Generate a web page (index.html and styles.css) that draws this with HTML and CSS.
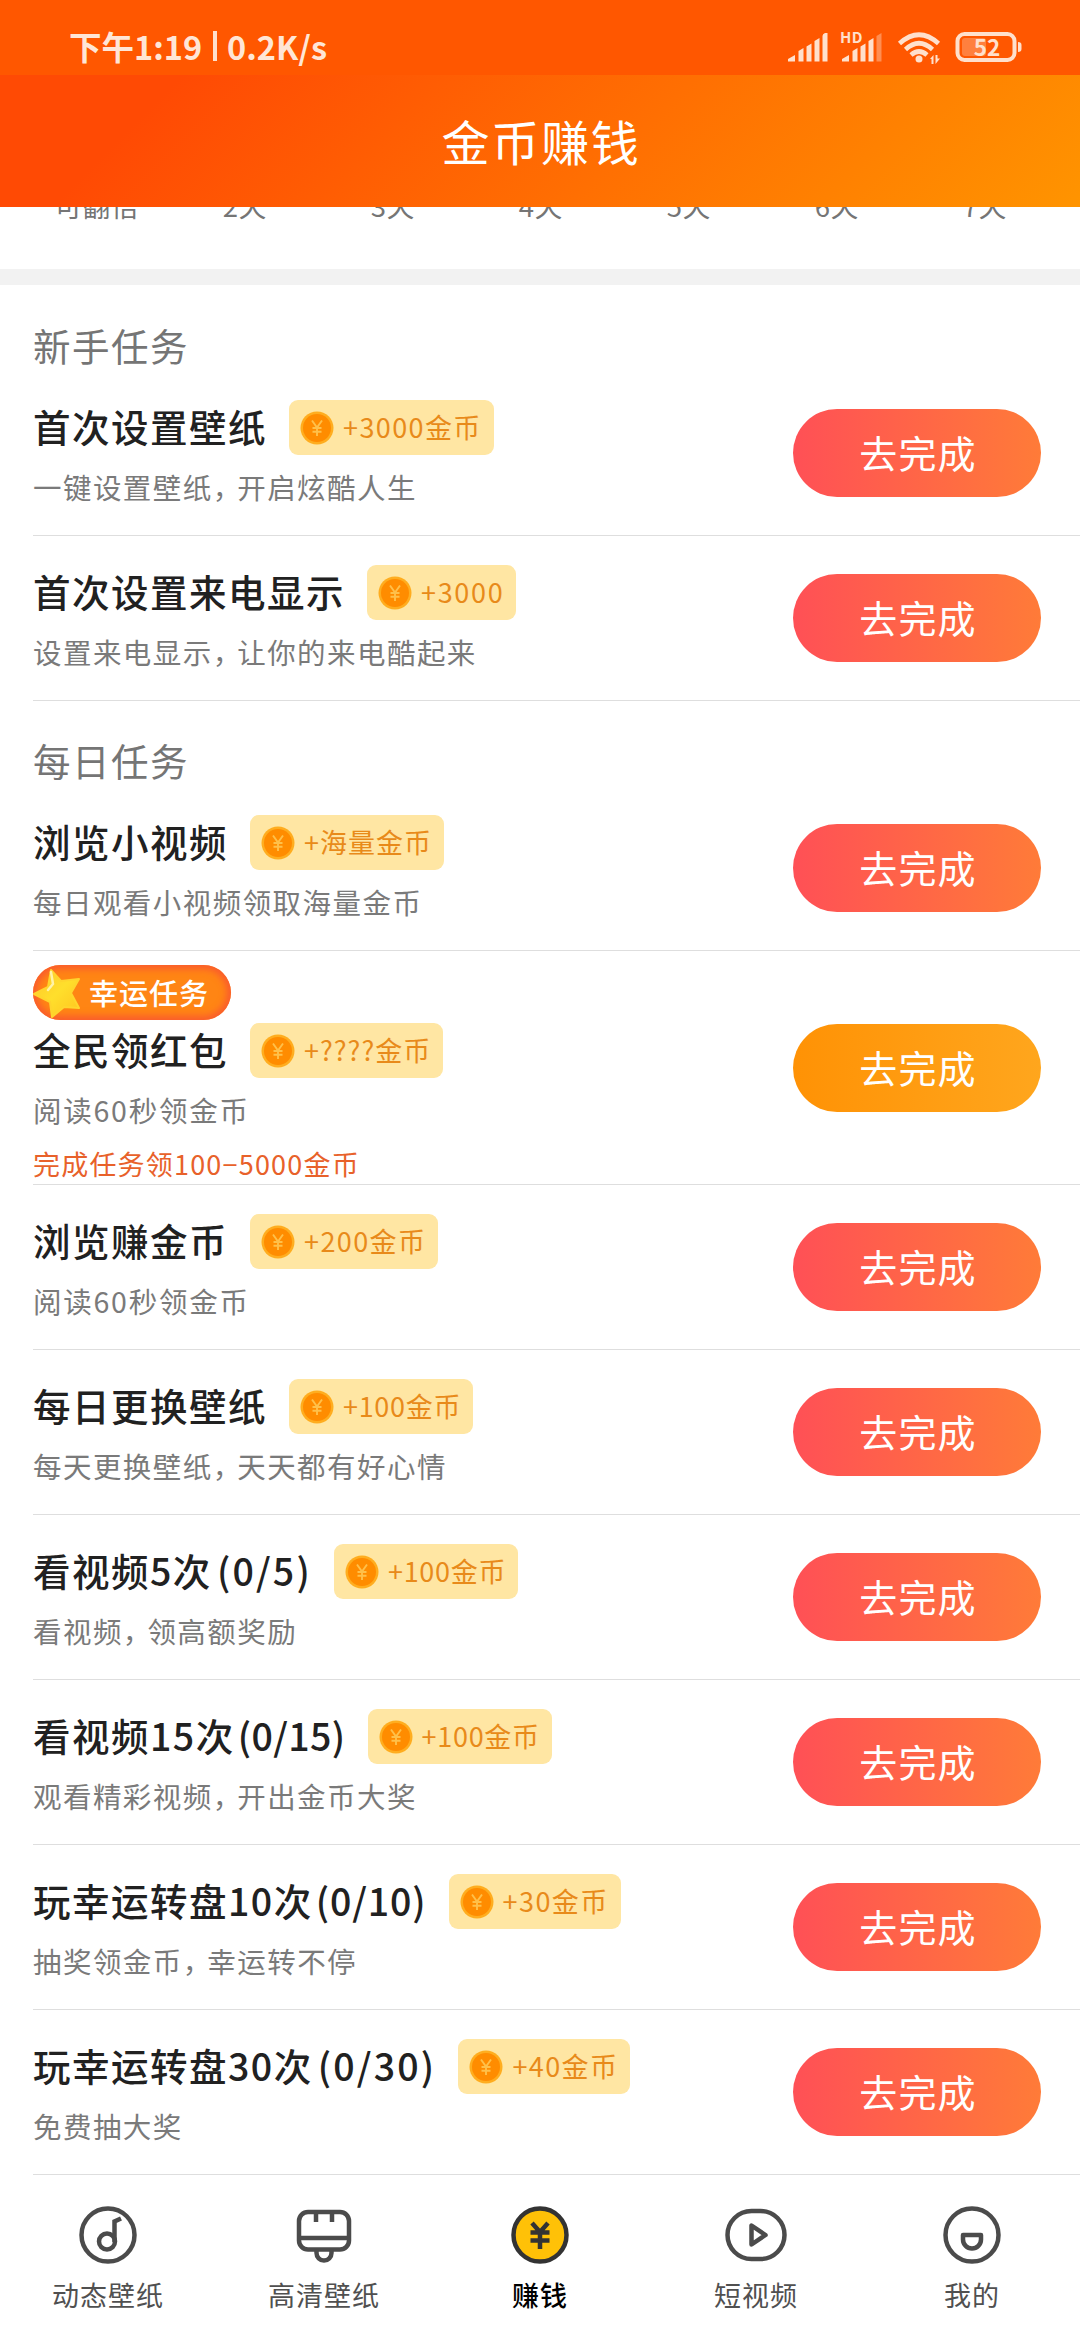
FILE: index.html
```html
<!DOCTYPE html>
<html lang="zh-CN">
<head>
<meta charset="utf-8">
<title>金币赚钱</title>
<link rel="stylesheet" href="styles.css">
</head>
<body>
<svg class="defs" width="0" height="0" aria-hidden="true">
  <symbol id="coin" viewBox="0 0 34 34">
    <circle cx="17" cy="17" r="16.500" fill="#ffad1f"/>
    <circle cx="17" cy="17" r="14" fill="#ff8c00"/>
    <path d="M12 9.500l5 7 5-7M17 16.500v8.500M12.500 17h9M12.500 20.800h9" fill="none" stroke="#ffc04a" stroke-width="1.900"/>
  </symbol>
</svg>
<div class="screen">
  <div class="status">
    <span class="clock">下午1:19<i class="bar"></i>0.2K/s</span>
    <svg class="status-icons" width="240" height="40" viewBox="0 0 240 40" fill="#ffe0cc">
      <path d="M1 33.500v-2.500l7-4v6.500zM11.500 33.500V23l5-3v13.500zM19.500 33.500V18.500l5-3v18zM27.500 33.500V13l5-3v23.500zM35.500 33.500V8q0-2 2.500-3h2.500v28.500z"/>
      <path d="M55 33.500v-2.500l7-4v6.500zM65.500 33.500V23l5-3v13.500zM73.500 33.500V18.500l5-3v18zM81.500 33.500V13l5-3v23.500z"/>
      <path d="M89.500 33.500V8l5-3v28.500z" opacity=".4"/>
      <text x="53" y="14.500" font-size="15" font-weight="700" letter-spacing=".5">HD</text>
      <g fill="none" stroke="#ffe0cc" stroke-width="4.600">
        <path d="M112.500 15.500Q132 -2 151.500 15.500M118.500 21.500Q132 9 145.500 21.500M124 27Q132 20 140 27"/>
      </g>
      <circle cx="132" cy="31" r="3.500"/>
      <path d="M143 31l3.500-4v9h-2v-5zM148.500 27h2v3.500h2.500l-4.500 5.500z"/>
      <rect x="170.500" y="6" width="57" height="26" rx="7" fill="none" stroke="#ffe0cc" stroke-width="4"/>
      <rect x="175" y="10" width="24" height="18" rx="3" opacity=".3"/>
      <path d="M231 14q3.500 0 3.500 3v4q0 3-3.500 3z"/>
      <text x="200" y="27.500" font-size="22.500" font-weight="700" text-anchor="middle">52</text>
    </svg>
  </div>
  <header class="header"><h1>金币赚钱</h1></header>
  <div class="days"><div class="days-row"><span>可翻倍</span><span>2天</span><span>3天</span><span>4天</span><span>5天</span><span>6天</span><span>7天</span></div></div>
  <div class="separator"></div>
  <main>
    <h2>新手任务</h2>
    <section class="task">
      <div class="info">
        <div class="line"><h3>首次设置壁纸</h3><span class="reward"><svg><use href="#coin"/></svg><b>+3000金币</b></span></div>
        <p>一键设置壁纸<i>，</i>开启炫酷人生</p>
      </div>
      <button>去完成</button>
    </section>
    <section class="task">
      <div class="info">
        <div class="line"><h3>首次设置来电显示</h3><span class="reward"><svg><use href="#coin"/></svg><b class="digits">+3000</b></span></div>
        <p>设置来电显示<i>，</i>让你的来电酷起来</p>
      </div>
      <button>去完成</button>
    </section>
    <h2>每日任务</h2>
    <section class="task">
      <div class="info">
        <div class="line"><h3>浏览小视频</h3><span class="reward"><svg><use href="#coin"/></svg><b class="words">+海量金币</b></span></div>
        <p>每日观看小视频领取海量金币</p>
      </div>
      <button>去完成</button>
    </section>
    <section class="task lucky">
      <div class="info">
        <div class="tag">
          <svg width="50" height="52" viewBox="0 0 50 52">
            <defs><linearGradient id="star" x1="0" y1="0" x2="1" y2="1"><stop offset="0" stop-color="#ffc52a"/><stop offset=".5" stop-color="#ffdf2c"/><stop offset="1" stop-color="#ffc41f"/></linearGradient></defs>
            <path d="M18 3L28 14 46 12 38 26 46 41 31 40 19 50 17 35 1 27 15 20z" fill="url(#star)" stroke="#ffd52d" stroke-width="2" stroke-linejoin="round"/>
            <path d="M18 5l2 12-5 6" fill="none" stroke="#fff3a8" stroke-width="2.500" stroke-linecap="round"/>
          </svg>
          <span>幸运任务</span>
        </div>
        <div class="line"><h3>全民领红包</h3><span class="reward"><svg><use href="#coin"/></svg><b class="words">+????金币</b></span></div>
        <p class="timed">阅读60秒领金币</p>
        <p class="note">完成任务领100−5000金币</p>
      </div>
      <button>去完成</button>
    </section>
    <section class="task">
      <div class="info">
        <div class="line"><h3>浏览赚金币</h3><span class="reward"><svg><use href="#coin"/></svg><b>+200金币</b></span></div>
        <p class="timed">阅读60秒领金币</p>
      </div>
      <button>去完成</button>
    </section>
    <section class="task">
      <div class="info">
        <div class="line"><h3>每日更换壁纸</h3><span class="reward"><svg><use href="#coin"/></svg><b class="narrow">+100金币</b></span></div>
        <p>每天更换壁纸<i>，</i>天天都有好心情</p>
      </div>
      <button>去完成</button>
    </section>
    <section class="task">
      <div class="info">
        <div class="line"><h3>看视频5次<span class="count wide">(0/5)</span></h3><span class="reward"><svg><use href="#coin"/></svg><b class="narrow">+100金币</b></span></div>
        <p>看视频<i>，</i>领高额奖励</p>
      </div>
      <button>去完成</button>
    </section>
    <section class="task">
      <div class="info">
        <div class="line"><h3>看视频15次<span class="count tight">(0/15)</span></h3><span class="reward"><svg><use href="#coin"/></svg><b class="narrow">+100金币</b></span></div>
        <p>观看精彩视频<i>，</i>开出金币大奖</p>
      </div>
      <button>去完成</button>
    </section>
    <section class="task">
      <div class="info">
        <div class="line"><h3>玩幸运转盘10次<span class="count">(0/10)</span></h3><span class="reward"><svg><use href="#coin"/></svg><b>+30金币</b></span></div>
        <p>抽奖领金币<i>，</i>幸运转不停</p>
      </div>
      <button>去完成</button>
    </section>
    <section class="task">
      <div class="info">
        <div class="line"><h3>玩幸运转盘30次<span class="count wide">(0/30)</span></h3><span class="reward"><svg><use href="#coin"/></svg><b>+40金币</b></span></div>
        <p>免费抽大奖</p>
      </div>
      <button>去完成</button>
    </section>
  </main>
  <nav>
    <a><svg viewBox="0 0 64 64"><circle cx="32" cy="32" r="26.500"/><circle cx="31" cy="38.500" r="8"/><path d="M38.500 39V18.500l6.500-3"/></svg><span>动态壁纸</span></a>
    <a><svg viewBox="0 0 64 64"><rect x="7" y="9" width="50" height="37.500" rx="9"/><path d="M7 35h50M24 9v10M40 9v10M24.500 46.500v3.500a7.500 7.500 0 0 0 15 0v-3.500"/></svg><span>高清壁纸</span></a>
    <a class="active"><svg viewBox="0 0 64 64"><circle cx="32" cy="32" r="26.500" fill="#ffc107"/><path d="M24 20l8 9 8-9M32 28v18M22.500 29.500h19M22.500 37.500h19"/></svg><span>赚钱</span></a>
    <a><svg viewBox="0 0 64 64"><rect x="3.500" y="8" width="57" height="48" rx="24"/><path d="M27.500 22.500v19l14-9.500z" stroke-linejoin="round"/></svg><span>短视频</span></a>
    <a><svg viewBox="0 0 64 64"><circle cx="32" cy="32" r="26.500"/><path d="M23 32h18v4.500a9 9 0 0 1-18 0z" stroke-linejoin="round"/></svg><span>我的</span></a>
  </nav>
</div>
</body>
</html>
```
FILE: styles.css
```css
* { box-sizing: border-box; margin: 0; padding: 0; }
body { font-family: "Noto Sans CJK SC", sans-serif; background: #fff; }
i { font-style: normal; }
.defs { display: block; height: 0; }
.screen { width: 1080px; height: 2340px; overflow: hidden; display: flex; flex-direction: column; }
.status { height: 75px; flex: none; background: #ff5700; display: flex; justify-content: space-between; padding: 27px 53px 0 69px; color: #ffe6d6; }
.clock { display: flex; align-items: center; height: 38px; font-size: 32.500px; font-weight: 700; line-height: 38px; white-space: nowrap; }
.bar { width: 4px; height: 30px; background: #ffe0cc; margin: 0 10px 0 11px; }
.status-icons { display: block; margin-top: 1px; }
.header { height: 132px; flex: none; background: linear-gradient(135deg, #ff4a04 15%, #ff9400 100%); display: flex; align-items: center; justify-content: center; padding: 0 0 3px 2px; color: #fff; }
h1 { font-size: 48px; font-weight: 400; line-height: 70px; letter-spacing: 1.700px; }
.days { height: 62px; flex: none; overflow: hidden; }
.days-row { display: grid; grid-template-columns: repeat(7, 148px); padding-left: 23px; margin-top: -22px; line-height: 40px; font-size: 27.500px; letter-spacing: .8px; text-align: center; color: #757575; }
.separator { height: 16px; flex: none; background: #f2f2f2; }
main { flex: none; padding: 1px 0 0 33px; }
h2 { height: 85px; padding-top: 31px; font-size: 37.500px; font-weight: 400; line-height: 56px; letter-spacing: 1.500px; color: #757575; }
.task { height: 165px; border-bottom: 1px solid #dedede; padding: 29px 39px 0 0; display: flex; justify-content: space-between; }
.info { display: flex; flex-direction: column; }
.line { display: flex; height: 55px; gap: 22px; align-items: center; }
h3 { height: 55px; font-size: 37.500px; font-weight: 500; line-height: 52px; letter-spacing: 1.500px; color: #212121; white-space: nowrap; }
.count { margin-left: 3px; letter-spacing: .9px; }
.count.tight { letter-spacing: .4px; }
.count.wide { margin-left: 5px; letter-spacing: 2.200px; }
.reward { height: 55px; border-radius: 9px; background: #ffe6a3; padding: 0 12px 0 11px; display: flex; align-items: center; gap: 9px; }
.reward svg { width: 34px; height: 34px; }
.reward b { height: 55px; font-size: 27px; font-weight: 400; line-height: 54px; letter-spacing: 1.400px; color: #e88a1a; white-space: nowrap; }
.reward .digits { letter-spacing: 1.700px; }
.reward .words { letter-spacing: 1px; }
.reward .narrow { letter-spacing: .7px; }
p { font-size: 28.500px; line-height: 40px; margin-top: 12px; letter-spacing: 1.450px; color: #7a7a7a; white-space: nowrap; }
p i { letter-spacing: -4px; }
.timed { letter-spacing: 1.750px; }
button { margin-top: 9px; padding: 0 0 2px 2px; flex: none; width: 248px; height: 88px; border: 0; border-radius: 44px; background: linear-gradient(90deg, #ff5056, #ff7b38); color: #fff; font: 400 38px/56px "Noto Sans CJK SC", sans-serif; letter-spacing: 1.200px; }
.lucky { height: 234px; padding-top: 14px; }
.lucky button { margin-top: 59px; background: linear-gradient(90deg, #ff9205, #ffa61d); }
.tag { width: 198px; height: 55px; margin-bottom: 3px; border-radius: 28px; background: #ff8514; box-shadow: inset 0 0 7px 4px #fa5b2e; display: flex; align-items: center; gap: 6px; color: #fff; font-size: 29px; font-weight: 500; line-height: 53px; letter-spacing: 1px; white-space: nowrap; }
.note { margin-top: 14px; font-size: 27px; letter-spacing: 1.200px; color: #e8612a; }
nav { flex: 1; display: grid; grid-template-columns: repeat(5, 216px); background: #fff; }
nav a { display: flex; flex-direction: column; align-items: center; padding-top: 28px; }
nav svg { width: 64px; height: 64px; fill: none; stroke: #4b4b4b; stroke-width: 4.500; }
nav span { font-size: 27px; line-height: 40px; margin-top: 8px; letter-spacing: 1px; color: #505050; }
nav .active svg { stroke: #333; }
nav .active span { color: #000; font-weight: 500; }
```
